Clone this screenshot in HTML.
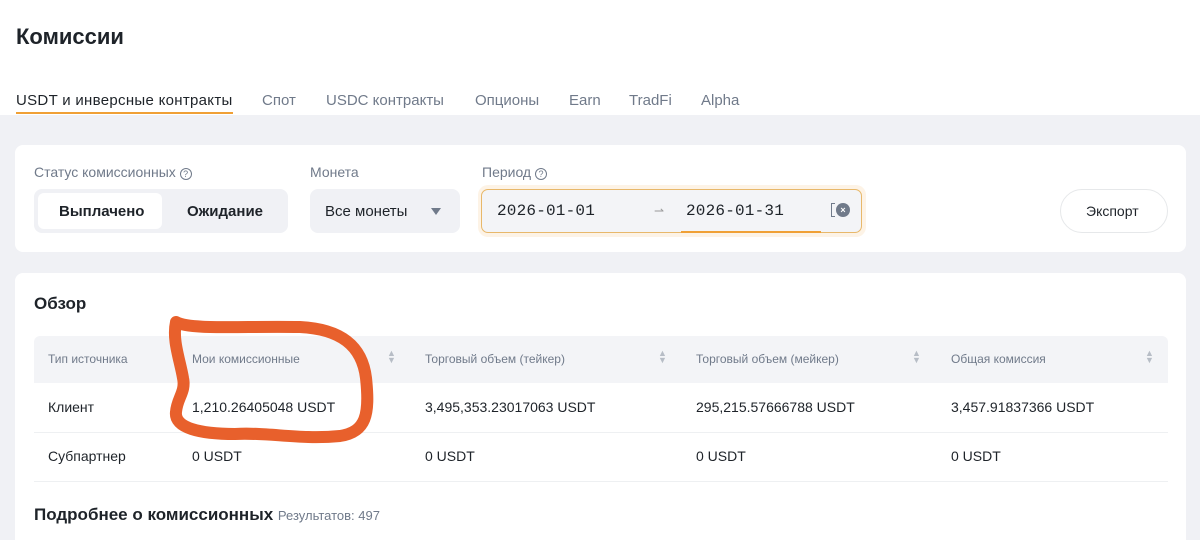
<!DOCTYPE html>
<html><head><meta charset="utf-8"><style>
*{margin:0;padding:0;box-sizing:border-box}
body{width:1200px;height:540px;overflow:hidden;background:#fff;font-family:"Liberation Sans",sans-serif;position:relative;color:#1e2329}
.a{position:absolute;white-space:nowrap}
.gray{position:absolute;left:0;top:115px;width:1200px;height:425px;background:#f0f1f5}
.card{position:absolute;background:#fff;border-radius:8px}
.lbl{color:#707a8a;font-size:14px}
.th{color:#707a8a;font-size:12px}
.td{font-size:14px;color:#1e2329}
</style></head><body>
<div class="a" style="left:16px;top:24px;font-size:22px;font-weight:bold">Комиссии</div>
<div class="a" style="left:16px;top:92px;font-size:15px;color:#1e2329;letter-spacing:0.3px">USDT и инверсные контракты</div>
<div style="position:absolute;left:16px;top:112px;width:217px;height:2px;background:#f0a035"></div>
<div class="a" style="left:262px;top:92px;font-size:15px;color:#707a8a">Спот</div>
<div class="a" style="left:326px;top:92px;font-size:15px;color:#707a8a">USDC контракты</div>
<div class="a" style="left:475px;top:92px;font-size:15px;color:#707a8a">Опционы</div>
<div class="a" style="left:569px;top:92px;font-size:15px;color:#707a8a">Earn</div>
<div class="a" style="left:629px;top:92px;font-size:15px;color:#707a8a">TradFi</div>
<div class="a" style="left:701px;top:92px;font-size:15px;color:#707a8a">Alpha</div>
<div class="gray"></div>
<div class="card" style="left:15px;top:145px;width:1171px;height:107px"></div>
<div class="a lbl" style="left:34px;top:164px">Статус комиссионных <span style="display:inline-block;width:12px;height:12px;border:1px solid #707a8a;border-radius:50%;font-size:9px;text-align:center;line-height:11px">?</span></div>
<div class="a" style="left:34px;top:189px;width:254px;height:44px;background:#f0f1f5;border-radius:8px"></div>
<div class="a" style="left:38px;top:193px;width:124px;height:36px;background:#fff;border-radius:6px"></div>
<div class="a" style="left:59px;top:203px;font-size:15px;font-weight:bold">Выплачено</div>
<div class="a" style="left:187px;top:203px;font-size:15px;font-weight:bold">Ожидание</div>
<div class="a lbl" style="left:310px;top:164px">Монета</div>
<div class="a" style="left:310px;top:189px;width:150px;height:44px;background:#f0f1f5;border-radius:8px"></div>
<div class="a" style="left:325px;top:203px;font-size:15px">Все монеты</div>
<div class="a" style="left:431px;top:208px;width:0;height:0;border-left:5px solid transparent;border-right:5px solid transparent;border-top:7px solid #707a8a"></div>
<div class="a lbl" style="left:482px;top:164px">Период <span style="display:inline-block;width:12px;height:12px;border:1px solid #707a8a;border-radius:50%;font-size:9px;text-align:center;line-height:11px">?</span></div>
<div class="a" style="left:478px;top:185px;width:388px;height:52px;background:#fdf3e6;border-radius:10px"></div>
<div class="a" style="left:481px;top:189px;width:381px;height:44px;background:#f3f4f7;border:1px solid #e8b86a;border-radius:7px"></div>
<div class="a" style="left:497px;top:202px;font-size:16px;font-family:'Liberation Mono',monospace;letter-spacing:0.2px">2026-01-01</div>
<div class="a" style="left:654px;top:204px;font-size:12px;color:#999">⇀</div>
<div class="a" style="left:686px;top:202px;font-size:16px;font-family:'Liberation Mono',monospace;letter-spacing:0.2px">2026-01-31</div>
<div class="a" style="left:681px;top:231px;width:140px;height:2px;background:#f0a035"></div>
<div class="a" style="left:831px;top:203px;width:4px;height:14px;border:1.5px solid #707a8a;border-right:none"></div>
<div class="a" style="left:836px;top:203px;width:14px;height:14px;background:#707a8a;border-radius:50%;color:#fff;font-size:9px;text-align:center;line-height:14px;font-weight:bold">×</div>
<div class="a" style="left:1060px;top:189px;width:108px;height:44px;border:1px solid #e6e8ea;border-radius:22px;background:#fff"></div>
<div class="a" style="left:1086px;top:203px;font-size:14px">Экспорт</div>
<div class="card" style="left:15px;top:273px;width:1171px;height:280px"></div>
<div class="a" style="left:34px;top:294px;font-size:17px;font-weight:bold">Обзор</div>
<div class="a" style="left:34px;top:336px;width:1134px;height:47px;background:#f3f4f7;border-radius:6px 6px 0 0"></div>
<div class="a th" style="left:48px;top:352px">Тип источника</div>
<div class="a th" style="left:192px;top:352px">Мои комиссионные</div>
<div class="a th" style="left:425px;top:352px">Торговый объем (тейкер)</div>
<div class="a th" style="left:696px;top:352px">Торговый объем (мейкер)</div>
<div class="a th" style="left:951px;top:352px">Общая комиссия</div>
<div class="a" style="left:387px;top:350px;font-size:9px;color:#b7bdc6;line-height:7px">▲<br>▼</div>
<div class="a" style="left:658px;top:350px;font-size:9px;color:#b7bdc6;line-height:7px">▲<br>▼</div>
<div class="a" style="left:912px;top:350px;font-size:9px;color:#b7bdc6;line-height:7px">▲<br>▼</div>
<div class="a" style="left:1145px;top:350px;font-size:9px;color:#b7bdc6;line-height:7px">▲<br>▼</div>
<div class="a td" style="left:48px;top:399px">Клиент</div>
<div class="a td" style="left:192px;top:399px">1,210.26405048 USDT</div>
<div class="a td" style="left:425px;top:399px">3,495,353.23017063 USDT</div>
<div class="a td" style="left:696px;top:399px">295,215.57666788 USDT</div>
<div class="a td" style="left:951px;top:399px">3,457.91837366 USDT</div>
<div class="a" style="left:34px;top:432px;width:1134px;height:1px;background:#eef0f2"></div>
<div class="a td" style="left:48px;top:448px">Субпартнер</div>
<div class="a td" style="left:192px;top:448px">0 USDT</div>
<div class="a td" style="left:425px;top:448px">0 USDT</div>
<div class="a td" style="left:696px;top:448px">0 USDT</div>
<div class="a td" style="left:951px;top:448px">0 USDT</div>
<div class="a" style="left:34px;top:481px;width:1134px;height:1px;background:#eef0f2"></div>
<div class="a" style="left:34px;top:505px;font-size:17px;font-weight:bold">Подробнее о комиссионных <span style="font-size:13px;font-weight:normal;color:#707a8a">Результатов: 497</span></div>
<svg class="a" style="left:0;top:0" width="1200" height="540"><path d="M176,322 C190,330 240,326 300,327 C340,329 362,345 366,378 C370,415 366,432 340,436 C300,440 268,432 235,434 C200,434 174,428 176,412 C177,398 186,392 183,378 C180,360 172,340 176,322" fill="none" stroke="#e8602c" stroke-width="12" stroke-linecap="round" stroke-linejoin="round"/></svg>
</body></html>
